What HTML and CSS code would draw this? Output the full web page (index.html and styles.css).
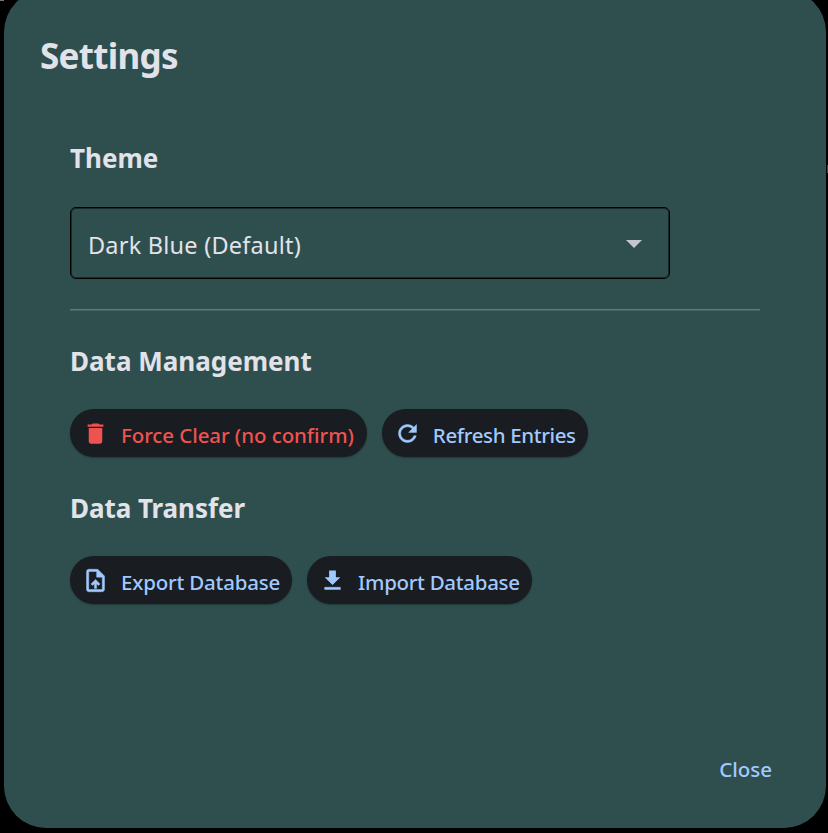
FILE: index.html
```html
<!DOCTYPE html>
<html lang="en">
<head>
<meta charset="utf-8">
<title>Settings</title>
<link rel="stylesheet" href="styles.css">
</head>
<body>
<span class="speck speck-corner"></span>
<span class="speck speck-edge"></span>
<main class="dialog">
  <h1 class="title">Settings</h1>
  <div class="content">
    <h2 class="heading theme">Theme</h2>
    <div class="select">
      <span class="select-text">Dark Blue (Default)</span>
      <svg class="arrow" viewBox="0 0 16 8"><path d="M0 0h16L8 8z"/></svg>
    </div>
    <hr class="divider">
    <h2 class="heading management">Data Management</h2>
    <div class="buttons">
      <button class="button danger">
        <svg class="icon" viewBox="0 0 24 24"><path d="M6 19c0 1.100.9 2 2 2h8c1.100 0 2-.9 2-2V7H6v12zM19 4h-3.500l-1-1h-5l-1 1H5v2h14V4z"/></svg>
        <span class="clear-label">Force Clear (no confirm)</span>
      </button>
      <button class="button">
        <svg class="icon" viewBox="0 0 24 24"><path class="bold" d="M17.650 6.350C16.200 4.900 14.210 4 12 4c-4.420 0-7.990 3.580-7.990 8s3.570 8 7.990 8c3.730 0 6.840-2.550 7.730-6h-2.080c-.82 2.330-3.040 4-5.650 4-3.310 0-6-2.690-6-6s2.690-6 6-6c1.660 0 3.140.69 4.220 1.780L13 11h7V4l-2.350 2.350z"/></svg>
        <span class="refresh-label">Refresh Entries</span>
      </button>
    </div>
    <h2 class="heading transfer">Data Transfer</h2>
    <div class="buttons">
      <button class="button">
        <svg class="icon" viewBox="0 0 24 24"><path class="bold" d="M14 2H6c-1.100 0-1.990.9-1.990 2L4 20c0 1.100.89 2 1.990 2H18c1.100 0 2-.9 2-2V8l-6-6zm4 18H6V4h7v5h5v11zM8 15.010l1.410 1.410L11 14.840V19h2v-4.160l1.590 1.590L16 15.010 12.010 11z"/></svg>
        <span class="export-label">Export Database</span>
      </button>
      <button class="button">
        <svg class="icon" viewBox="0 0 24 24"><path d="M19 9h-4V3H9v6H5l7 7 7-7z"/><path d="M5 18h14v2H5z" class="bold"/></svg>
        <span class="import-label">Import Database</span>
      </button>
    </div>
  </div>
  <div class="actions"><button class="close">Close</button></div>
</main>
</body>
</html>
```
FILE: styles.css
```css
* { box-sizing: border-box; }
body {
  margin: 0;
  height: 833px;
  overflow: hidden;
  background: #000;
  color: #e2e2e9;
  font-family: "Noto Sans", "Open Sans", sans-serif;
  display: flow-root;
}
.dialog {
  width: 822px;
  height: 838px;
  margin: -10px 0 0 4px;
  padding: 44px 36px 36px;
  border-radius: 42px;
  background: #2f4f4f;
  display: flex;
  flex-direction: column;
}
.title { margin: 0; height: 44px; line-height: 44px; font-size: 35px; font-weight: 700; letter-spacing: -.7px; }
.content { padding: 62px 30px 0; }
.heading { margin: 0; height: 36px; line-height: 36px; font-size: 26px; font-weight: 700; white-space: nowrap; }
.transfer { letter-spacing: -.06px; }
.select {
  width: 600px;
  height: 72px;
  margin-top: 31px;
  padding: 4px 26px 0 16px;
  border: 1px solid #000;
  border-radius: 6px;
  box-shadow: inset 0 0 0 1px rgba(0, 0, 0, .45);
  display: flex;
  align-items: center;
  justify-content: space-between;
  font-size: 23.5px;
}
.select-text { padding-left: 1px; letter-spacing: .22px; }
.arrow { width: 16px; height: 8px; margin: -2px 1px 0 0; fill: #c4c6d0; }
.divider { width: 690px; height: 2px; margin: 30px 0 32px; border: 0; background: linear-gradient(#607979 50%, #47635f 50%); }
.buttons { display: flex; gap: 15px; margin: 30px 0 33px; }
.button {
  height: 48px;
  padding: 0 12px;
  border: 0;
  border-radius: 24px;
  background: #191c20;
  color: #a0c9ff;
  box-shadow: 0 1px 2px rgba(0, 0, 0, .3);
  display: flex;
  align-items: center;
  gap: 12px;
  font: 500 20.5px/28px "Noto Sans", "Open Sans", sans-serif;
  white-space: nowrap;
}
.button span { padding-top: 3px; }
.button.danger { color: #ef5350; padding-right: 13px; }
.clear-label { letter-spacing: -.08px; }
.refresh-label { letter-spacing: -.36px; }
.export-label { letter-spacing: -.2px; }
.import-label { letter-spacing: -.31px; }
.icon { width: 27px; height: 27px; fill: currentColor; }
.bold { stroke: currentColor; stroke-width: .4; }
.actions { margin-top: auto; display: flex; justify-content: flex-end; padding: 0 18px 7px; }
.close { padding: 0; border: 0; background: none; color: #a0c9ff; font: 500 20.5px/32px "Noto Sans", "Open Sans", sans-serif; }
.speck { position: absolute; background: #777; }
.speck-corner { top: 0; left: 0; width: 4px; height: 1px; }
.speck-edge { top: 165px; left: 827px; width: 1px; height: 8px; background: #444; }
```
